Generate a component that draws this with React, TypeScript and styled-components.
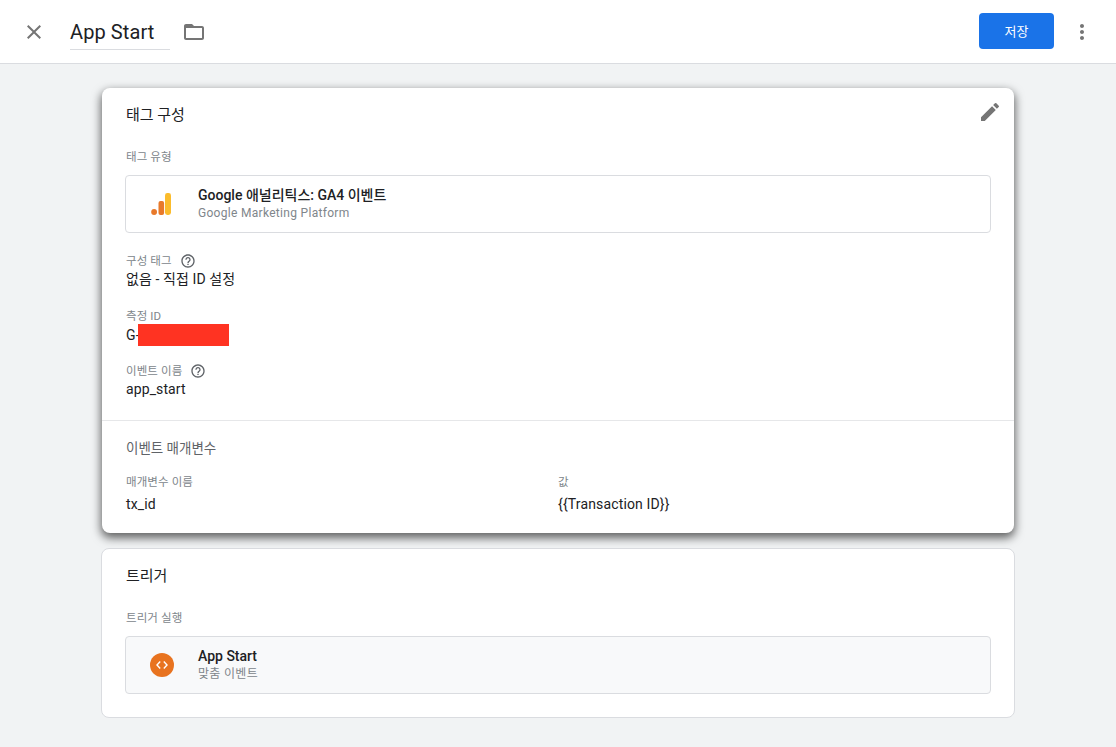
import styled, { createGlobalStyle } from 'styled-components'

const GlobalStyle = createGlobalStyle`
  html, body {
    margin: 0;
    padding: 0;
    background: #f1f3f4;
  }
  body {
    font-family: Roboto, "Noto Sans CJK KR", sans-serif;
    color: #202124;
  }
`

const HelpIcon = () => (
  <Help width="16" height="16" viewBox="0 0 24 24" fill="#5f6368">
    <path d="M11 18h2v-2h-2v2zm1-16C6.48 2 2 6.48 2 12s4.48 10 10 10 10-4.48 10-10S17.52 2 12 2zm0 18c-4.41 0-8-3.59-8-8s3.59-8 8-8 8 3.59 8 8-3.59 8-8 8zm0-14c-2.21 0-4 1.79-4 4h2c0-1.1.9-2 2-2s2 .9 2 2c0 2-3 1.75-3 5h2c0-2.25 3-2.5 3-5 0-2.21-1.79-4-4-4z" />
  </Help>
)

const App = () => {
  return (
    <Page>
      <GlobalStyle />
      <Header>
        <CloseButton>
          <svg width="24" height="24" viewBox="0 0 24 24" fill="#757575">
            <path d="M19 6.41 17.59 5 12 10.59 6.41 5 5 6.41 10.59 12 5 17.59 6.41 19 12 13.41 17.59 19 19 17.59 13.41 12z" />
          </svg>
        </CloseButton>
        <TitleField>App Start</TitleField>
        <FolderButton>
          <svg width="24" height="24" viewBox="0 0 24 24" fill="#757575">
            <path d="M20 6h-8l-2-2H4c-1.1 0-1.99.9-1.99 2L2 18c0 1.1.9 2 2 2h16c1.1 0 2-.9 2-2V8c0-1.1-.9-2-2-2zm0 12H4V8h16v10z" />
          </svg>
        </FolderButton>
        <Spacer />
        <SaveButton>저장</SaveButton>
        <MoreButton>
          <svg width="24" height="24" viewBox="0 0 24 24" fill="#757575">
            <path d="M12 8c1.1 0 2-.9 2-2s-.9-2-2-2-2 .9-2 2 .9 2 2 2zm0 2c-1.1 0-2 .9-2 2s.9 2 2 2 2-.9 2-2-.9-2-2-2zm0 6c-1.1 0-2 .9-2 2s.9 2 2 2 2-.9 2-2-.9-2-2-2z" />
          </svg>
        </MoreButton>
      </Header>

      <Content>
        <ActiveCard>
          <EditIcon width="24" height="24" viewBox="0 0 24 24" fill="#757575">
            <path d="M3 17.25V21h3.75L17.81 9.94l-3.75-3.75L3 17.25zM20.71 7.04a1 1 0 0 0 0-1.41l-2.34-2.34a1 1 0 0 0-1.41 0l-1.83 1.83 3.75 3.75 1.83-1.83z" />
          </EditIcon>
          <TagSection>
            <CardTitle>태그 구성</CardTitle>
            <SectionLabel>태그 유형</SectionLabel>
            <TypeBox>
              <IconSlot>
                <svg width="24" height="24" viewBox="0 0 24 24">
                  <rect x="15" y="1" width="6" height="22" rx="2.4" fill="#fbbc2c" />
                  <rect x="8.5" y="9" width="5.6" height="14" rx="2" fill="#e8792a" />
                  <circle cx="4.1" cy="20" r="2.9" fill="#e8792a" />
                </svg>
              </IconSlot>
              <div>
                <TypeName>Google 애널리틱스: GA4 이벤트</TypeName>
                <TypeSub>Google Marketing Platform</TypeSub>
              </div>
            </TypeBox>

            <Field $top={19}>
              <FieldLabel>
                구성 태그 <HelpIcon />
              </FieldLabel>
              <FieldValue>없음 - 직접 ID 설정</FieldValue>
            </Field>
            <Field $top={18}>
              <FieldLabel>측정 ID</FieldLabel>
              <MeasureValue>
                G-
                <Redaction />
              </MeasureValue>
            </Field>
            <Field $top={16}>
              <FieldLabel>
                이벤트 이름 <HelpIcon />
              </FieldLabel>
              <FieldValue>app_start</FieldValue>
            </Field>
          </TagSection>

          <ParamSection>
            <SubTitle>이벤트 매개변수</SubTitle>
            <ParamGrid>
              <div>
                <FieldLabel>매개변수 이름</FieldLabel>
                <ParamValue>tx_id</ParamValue>
              </div>
              <div>
                <FieldLabel>값</FieldLabel>
                <ParamValue>{'{{Transaction ID}}'}</ParamValue>
              </div>
            </ParamGrid>
          </ParamSection>
        </ActiveCard>

        <Card>
          <CardTitle>트리거</CardTitle>
          <SectionLabel>트리거 실행</SectionLabel>
          <TriggerBox>
            <IconSlot>
              <TriggerBadge>
                <svg width="14" height="14" viewBox="0 0 14 14" fill="none" stroke="#fff" strokeWidth="1.4">
                  <path d="M5.2 3.6 2 7l3.2 3.4M8.8 3.6 12 7l-3.2 3.4" />
                </svg>
              </TriggerBadge>
            </IconSlot>
            <div>
              <TypeName>App Start</TypeName>
              <TypeSub>맞춤 이벤트</TypeSub>
            </div>
          </TriggerBox>
        </Card>
      </Content>
    </Page>
  )
}

export default App

const Page = styled.div`
  width: 1116px;
  height: 747px;
  overflow: hidden;
  background: #f1f3f4;
`

const Header = styled.header`
  display: flex;
  align-items: center;
  height: 64px;
  box-sizing: border-box;
  padding: 0 22px;
  background: #fff;
  border-bottom: 1px solid #dadce0;
`

const CloseButton = styled.div`
  display: flex;
  width: 24px;
  height: 24px;
`

const TitleField = styled.div`
  width: 100px;
  height: 34px;
  margin: 3px 0 0 24px;
  box-sizing: border-box;
  border-bottom: 1px solid #dadce0;
  font-size: 20px;
  line-height: 33px;
  letter-spacing: 0.1px;
  color: #202124;
`

const FolderButton = styled.div`
  display: flex;
  width: 24px;
  height: 24px;
  margin-left: 12px;
`

const Spacer = styled.div`
  flex: 1;
`

const SaveButton = styled.button`
  width: 75px;
  height: 36px;
  margin-bottom: 2px;
  padding: 0;
  border: 0;
  border-radius: 4px;
  background: #1a73e8;
  color: #fff;
  font-family: inherit;
  font-size: 13px;
`

const MoreButton = styled.div`
  display: flex;
  width: 24px;
  height: 24px;
  margin-left: 16px;
`

const Content = styled.main`
  display: flex;
  flex-direction: column;
  gap: 15px;
  width: 912px;
  margin: 24px 0 0 102px;
`

const Card = styled.section`
  height: 170px;
  margin: 0 -1px;
  box-sizing: border-box;
  padding: 17px 24px;
  background: #fff;
  border: 1px solid #dadce0;
  border-radius: 8px;
`

const ActiveCard = styled.section`
  position: relative;
  height: 445px;
  box-sizing: border-box;
  background: #fff;
  border-radius: 8px;
  box-shadow: 0 4px 10px 1px rgba(0, 0, 0, 0.6);
`

const EditIcon = styled.svg`
  position: absolute;
  top: 12px;
  right: 12px;
`

const TagSection = styled.div`
  height: 333px;
  box-sizing: border-box;
  padding: 17px 24px 0;
  border-bottom: 1px solid #e6e7e9;
`

const CardTitle = styled.h2`
  margin: 0;
  font-size: 15px;
  font-weight: 400;
  line-height: 20px;
  color: #202124;
`

const SectionLabel = styled.div`
  margin: 23px 0 9px;
  font-size: 11.5px;
  line-height: 18px;
  letter-spacing: 0.1px;
  color: #80868b;
`

const TypeBox = styled.div`
  display: flex;
  align-items: center;
  width: 866px;
  height: 58px;
  margin-left: -1px;
  box-sizing: border-box;
  background: #fff;
  border: 1px solid #dadce0;
  border-radius: 4px;
`

const TriggerBox = styled(TypeBox)`
  background: #f8f9fa;
`

const IconSlot = styled.div`
  display: flex;
  justify-content: center;
  align-items: center;
  width: 72px;
  height: 100%;
`

const TypeName = styled.div`
  font-size: 14px;
  font-weight: 500;
  line-height: 16px;
  color: #202124;
`

const TypeSub = styled.div`
  margin-top: 2px;
  font-size: 12px;
  line-height: 16px;
  letter-spacing: 0.3px;
  color: #80868b;
`

const Field = styled.div<{ $top: number }>`
  margin-top: ${(props) => props.$top}px;
`

const FieldLabel = styled.div`
  display: flex;
  align-items: center;
  gap: 8px;
  height: 18px;
  font-size: 11.5px;
  line-height: 18px;
  letter-spacing: 0.1px;
  color: #80868b;
`

const FieldValue = styled.div`
  margin-top: -1px;
  font-size: 14px;
  line-height: 20px;
  letter-spacing: 0.1px;
  color: #202124;
`

const MeasureValue = styled(FieldValue)`
  display: flex;
  align-items: center;
  height: 22px;
  margin-top: -1px;
`

const Redaction = styled.span`
  display: block;
  width: 91px;
  height: 22px;
  margin-left: -1.5px;
  background: #ff3322;
`

const Help = styled.svg`
  flex: none;
`

const ParamSection = styled.div`
  padding: 17px 24px 0;
`

const SubTitle = styled.h3`
  margin: 0;
  font-size: 13.5px;
  font-weight: 400;
  line-height: 20px;
  color: #5f6368;
`

const ParamGrid = styled.div`
  display: grid;
  grid-template-columns: 432px 1fr;
  margin-top: 15px;
`

const ParamValue = styled.div`
  margin-top: 3px;
  font-size: 14px;
  line-height: 20px;
  letter-spacing: 0.15px;
  color: #202124;
`

const TriggerBadge = styled.div`
  display: flex;
  justify-content: center;
  align-items: center;
  width: 24px;
  height: 24px;
  border-radius: 50%;
  background: #e8731f;
`
